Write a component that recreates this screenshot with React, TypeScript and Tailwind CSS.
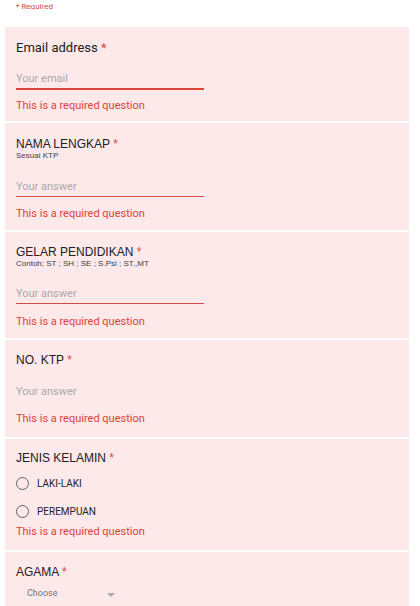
import React from 'react';

const Star = () => <span className="text-[#db4437]"> *</span>;

const ErrorText: React.FC<{ className?: string }> = ({ className = '' }) => (
  <div className={`text-[11px] leading-[14px] text-[#db4437] ${className}`} style={{ fontFamily: 'Roboto, sans-serif' }}>
    This is a required question
  </div>
);

const TextQuestion: React.FC<{
  title: string;
  hint?: string;
  h: string;
  pt: string;
  inputMt: string;
  errMt: string;
  line: 'none' | 'thin';
}> = ({ title, hint, h, pt, inputMt, errMt, line }) => (
  <div className={`bg-[#fde8ea] px-[11px] ${h} ${pt}`}>
    <div className="text-[12px] leading-[14px] text-[#202124]" style={{ fontFamily: '"Liberation Sans", Arial, sans-serif' }}>
      {title}
      <Star />
    </div>
    {hint && (
      <div className="text-[8px] leading-[10px] text-[#3c4043]" style={{ fontFamily: '"Liberation Sans", Arial, sans-serif' }}>
        {hint}
      </div>
    )}
    <div
      className={`${inputMt} w-[188px] h-[18px] flex items-center text-[11px] text-[#aaaaaa] ${
        line === 'thin' ? 'border-b border-[#cf4b43]' : 'border-b border-transparent'
      }`}
      style={{ fontFamily: 'Roboto, sans-serif' }}
    >
      Your answer
    </div>
    <ErrorText className={errMt} />
  </div>
);

const Radio: React.FC<{ label: string }> = ({ label }) => (
  <div className="flex items-center h-[20px]">
    <span className="w-[13px] h-[13px] rounded-full border-[1.5px] border-[#5f6368] box-border" />
    <span className="ml-[8px] text-[10px] text-[#202124]" style={{ fontFamily: 'Roboto, sans-serif' }}>
      {label}
    </span>
  </div>
);

export default function App() {
  return (
    <div className="w-[420px] h-[606px] overflow-hidden bg-white" style={{ fontFamily: 'Roboto, sans-serif' }}>
      <div className="px-[16px] pt-[1px] h-[27px] text-[8px] leading-[12px] text-[#db4437]">* Required</div>
      <div className="ml-[5px] w-[404px] flex flex-col gap-[2px]">
        {/* Email */}
        <div className="bg-[#fde8ea] px-[11px] h-[94px] pt-[13px]">
          <div className="text-[13px] leading-[16px] text-[#202124]">
            Email address
            <Star />
          </div>
          <div className="mt-[14px] w-[188px] h-[20px] flex items-center text-[11px] text-[#aaaaaa] border-b-2 border-[#db4437]">
            Your email
          </div>
          <ErrorText className="mt-[9px]" />
        </div>

        <TextQuestion
          title="NAMA LENGKAP"
          hint="Sesuai KTP"
          h="h-[107px]"
          pt="pt-[14px]"
          inputMt="mt-[18px]"
          errMt="mt-[10px]"
          line="thin"
        />
        <TextQuestion
          title="GELAR PENDIDIKAN"
          hint="Contoh; ST ; SH ; SE ; S.Psi ; ST.,MT"
          h="h-[106px]"
          pt="pt-[13px]"
          inputMt="mt-[17px]"
          errMt="mt-[11px]"
          line="thin"
        />
        <TextQuestion title="NO. KTP" h="h-[97px]" pt="pt-[13px]" inputMt="mt-[17px]" errMt="mt-[10px]" line="none" />

        {/* Jenis kelamin */}
        <div className="bg-[#fde8ea] px-[11px] h-[111px] pt-[12px]">
          <div className="text-[12px] leading-[14px] text-[#202124]" style={{ fontFamily: '"Liberation Sans", Arial, sans-serif' }}>
            JENIS KELAMIN
            <Star />
          </div>
          <div className="mt-[8px] flex flex-col gap-[8px]">
            <Radio label="LAKI-LAKI" />
            <Radio label="PEREMPUAN" />
          </div>
          <ErrorText className="mt-[4px]" />
        </div>

        {/* Agama */}
        <div className="bg-[#fde8ea] px-[11px] pt-[13px] h-[60px]">
          <div className="text-[12px] leading-[14px] text-[#202124]" style={{ fontFamily: '"Liberation Sans", Arial, sans-serif' }}>
            AGAMA
            <Star />
          </div>
          <div className="mt-[7px] ml-[11px] flex items-center h-[16px] text-[9px] text-[#757575]">
            <span className="w-[80px]">Choose</span>
            <svg width="8" height="4" viewBox="0 0 8 4" className="mt-[1px]">
              <path d="M0 0 L8 0 L4 4 Z" fill="#aaaaaa" />
            </svg>
          </div>
        </div>
      </div>
    </div>
  );
}
